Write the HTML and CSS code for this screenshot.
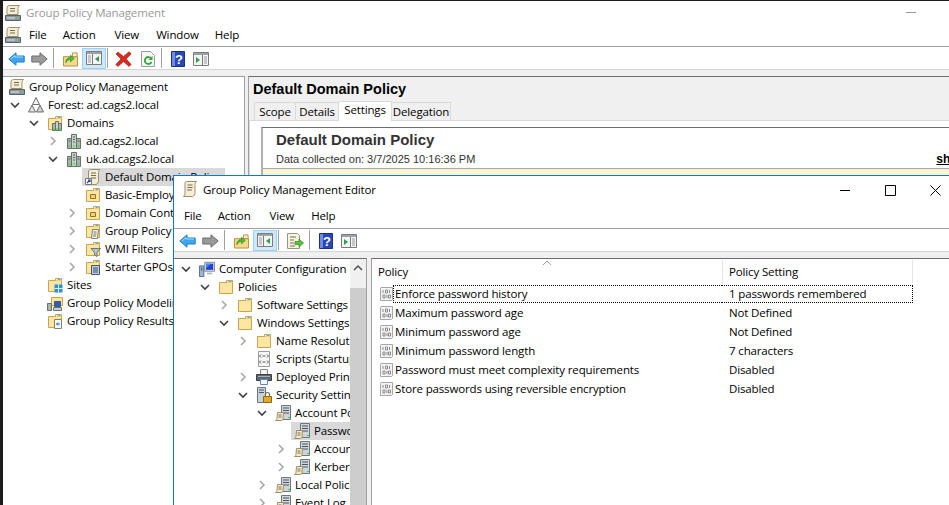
FILE: index.html
```html
<!DOCTYPE html>
<html lang="en">
<head>
    <meta charset="UTF-8">
    <title>Group Policy Management</title>
    <link rel="stylesheet" href="styles.css">
</head>
<body>

<svg class="icon-defs" width="0" height="0">
    <symbol id="i-open" viewBox="0 0 12 12"><path d="M2 4l4 4 4-4" fill="none" stroke="#404040" stroke-width="1.6"/></symbol>
    <symbol id="i-closed" viewBox="0 0 12 12"><path d="M4 2l4 4-4 4" fill="none" stroke="#a8a8a8" stroke-width="1.6"/></symbol>

    <symbol id="i-scroll" viewBox="0 0 16 16"><path d="M4.500 .5h10c-1 1-1.500 2-1.500 3v8c0 2-1 3.500-2.500 4h-9c1-1 1.500-2 1.500-3V3c0-1.500.5-2.500 1.500-2.500z" fill="#f6eed3" stroke="#9b8f70"/><path d="M5.500 4h5M5.500 6.500h5M5 9h5" stroke="#6f6a5c"/></symbol>
    <symbol id="i-console" viewBox="0 0 16 16"><path d="M4.500 .5h10c-1 1-1.500 2-1.500 3v6H2V3c0-1.500 1-2.500 2.500-2.500z" fill="#f6eed3" stroke="#9b8f70"/><path d="M5 3.500h5M5 6h5" stroke="#6f6a5c"/><path d="M.5 10.500h15v5H.5z" fill="#8e9aa0" stroke="#59636a"/><path d="M2 13h8" stroke="#dfe5e8"/><path d="M12 13h2" stroke="#54d05a"/></symbol>
    <symbol id="i-forest" viewBox="0 0 16 16"><path d="M8 .5l3.500 7h-7z" fill="#f2f2f2" stroke="#6d6d6d"/><path d="M4 8l3.500 7H.5z" fill="#e0e0e0" stroke="#6d6d6d"/><path d="M12 8l3.500 7h-7z" fill="#cfcfcf" stroke="#6d6d6d"/></symbol>
    <symbol id="i-folder" viewBox="0 0 16 16"><path d="M1.500 3.500h13v11h-13z" fill="#fbe6a2" stroke="#c9a551"/><path d="M8.500 3.500v-2h6v2" fill="#fff6d8" stroke="#c9a551"/><path d="M10.500 2.500h3" stroke="#6aa5dc"/></symbol>
    <symbol id="i-server" viewBox="0 0 16 16"><path d="M1.500 5.500h4v10h-4zM10.500 5.500h4v10h-4z" fill="#aab6a8" stroke="#66736b"/><path d="M5.500 1.500h5v14h-5z" fill="#c6d0c6" stroke="#66736b"/><path d="M7 4h2M7 6.500h2M7 9h2M2.500 8h2M11.500 8h2" stroke="#53636a"/><path d="M2.500 13h2M7 13h2M11.500 13h2" stroke="#3bcf4a"/></symbol>
    <symbol id="i-domains" viewBox="0 0 16 16"><use href="#i-folder"/><path d="M5.500 8.500h3v7h-3zM11.500 8.500h3v7h-3z" fill="#aab6a8" stroke="#66736b"/><path d="M8.500 6.500h3v9h-3z" fill="#c6d0c6" stroke="#66736b"/><path d="M6 14h2M9 14h2M12 14h2" stroke="#3bcf4a"/></symbol>
    <symbol id="i-gpolink" viewBox="0 0 16 16"><path d="M5.500 .5h9.500c-1 1-1.500 2-1.500 3v8c0 2-1 3.500-2.500 4H3.500V3c0-1.500.5-2.500 2-2.500z" fill="#f6eed3" stroke="#9b8f70"/><path d="M6 4h5M6 6.500h5M6 9h5" stroke="#6f6a5c"/><path d="M.5 9.500h6v6h-6z" fill="#fff" stroke="#777"/><path d="M2 14l3-3M3 11h2v2" fill="none" stroke="#1d3fb5" stroke-width="1.200"/></symbol>
    <symbol id="i-ou" viewBox="0 0 16 16"><use href="#i-folder"/><path d="M5.500 7.500h5v4h-5z" fill="#f6cf76" stroke="#8d7430"/></symbol>
    <symbol id="i-gpofolder" viewBox="0 0 16 16"><use href="#i-folder"/><path d="M7.500 6.500h6l-1 9h-6z" fill="#f4f2e8" stroke="#83806f"/><path d="M8.500 9h3M8.500 11h3M8 13h3" stroke="#777"/></symbol>
    <symbol id="i-wmi" viewBox="0 0 16 16"><use href="#i-folder"/><path d="M6 7.500h9.500l-3.500 4v4l-2.500-1.500v-2.500z" fill="#b9c2c9" stroke="#677681"/></symbol>
    <symbol id="i-starter" viewBox="0 0 16 16"><use href="#i-folder"/><path d="M6.500 6.500h8v9h-8z" fill="#c5cfdc" stroke="#46566b"/><path d="M8 9h5M8 11h5M8 13h5" stroke="#2f4c78"/></symbol>
    <symbol id="i-sites" viewBox="0 0 16 16"><use href="#i-folder"/><path d="M7.500 7.500h8v8h-8z" fill="#2f8fd6"/><path d="M11.500 7.500v8M7.500 11.500h8" stroke="#d9eefb"/></symbol>
    <symbol id="i-modeling" viewBox="0 0 16 16"><path d="M4.500 2.500h11v8h-11z" fill="#fbe6a2" stroke="#c9a551"/><path d="M7.500 6.500h6v5h-6z" fill="#2c5fc4" stroke="#4a5870"/><path d="M.5 8.500h4v7h-4z" fill="#aab6a8" stroke="#66736b"/><path d="M6.500 12.500h8v3h-8z" fill="#c9d1d9" stroke="#66736b"/></symbol>
    <symbol id="i-results" viewBox="0 0 16 16"><use href="#i-folder"/><path d="M7.500 6.500h7v9h-7z" fill="#f7f7f7" stroke="#83806f"/><path d="M13 11H9.500M11 9.500L9.500 11l1.500 1.500" fill="none" stroke="#2d6ab3"/></symbol>

    <symbol id="i-computer" viewBox="0 0 18 18"><path d="M6.500 1.500h11v10h-11z" fill="#e3e7ec" stroke="#717c88"/><path d="M8 3h8v7H8z" fill="#1f3fd0"/><path d="M8 3l6 0-6 5z" fill="#3d8df0"/><path d="M9 13h6v2H9z" fill="#b0b8c0"/><path d="M.5 5.500h5v12h-5z" fill="#9fb6d3" stroke="#4d647f"/><path d="M2 8h2M2 10h2" stroke="#1e3f73"/></symbol>
    <symbol id="i-scripts" viewBox="0 0 16 16"><path d="M2.500 .5h11v15h-11z" fill="#f7f7f7" stroke="#9a9a9a"/><path d="M5 3.500l-1.500 1.500 1.500 1.500M11 3.500l1.500 1.500-1.500 1.500M5 9.500l-1.500 1.500 1.500 1.500M11 9.500l1.500 1.500-1.500 1.500M6.500 5h3M6.500 11h3" fill="none" stroke="#555"/></symbol>
    <symbol id="i-printer" viewBox="0 0 16 16"><path d="M4.500 .5h7v5h-7z" fill="#f4f4f4" stroke="#888"/><path d="M.5 5.500h15v6H.5z" fill="#5f666d" stroke="#3a3f44"/><path d="M4.500 10.500h7v5h-7z" fill="#fff" stroke="#5a8bc4"/><path d="M2 7.500h12" stroke="#a7adb3"/></symbol>
    <symbol id="i-security" viewBox="0 0 16 16"><path d="M1.500 .5h8v15h-8z" fill="#c9d2da" stroke="#6c7780"/><path d="M3 3h5M3 5.500h5" stroke="#4c5761"/><path d="M7.500 9.500h8v6h-8z" fill="#e0ac28" stroke="#8a6a10"/><path d="M9.500 9.500v-2a2 2 0 0 1 4 0v2" fill="none" stroke="#7a6a3c" stroke-width="1.200"/></symbol>
    <symbol id="i-policy" viewBox="0 0 16 16"><path d="M6.500 .5h9v14h-9z" fill="#cfd6da" stroke="#6c7780"/><path d="M8 3h6M8 5.500h6M8 8h6" stroke="#4c5761"/><path d="M13 12.500h2" stroke="#2fd048"/><path d="M2.500 7.500h6l-.5 6c0 1-.5 2-1.500 2H.5c1-.5 1.500-1 1.500-2z" fill="#f6e9c2" stroke="#9b8f70"/><path d="M3.500 10h3M3.500 12h3" stroke="#7a7058"/></symbol>
    <symbol id="i-bits" viewBox="0 0 14 14"><path d="M2 .5h11.500v12l-1 1H1.500v-12z" fill="#f3f3f3" stroke="#a6a6a6"/><path d="M4 3v3M6.500 3h2v3h-2zM9.500 8h2v3h-2zM4 8h2v3H4zM8 8v3M10.500 3v3" fill="none" stroke="#8c8c8c"/></symbol>

    <symbol id="t-back" viewBox="0 0 17 14"><path d="M.8 7L8 .8V4h8.200v6H8v3.200z" fill="#3ea6ee" stroke="#1f7fd0"/><path d="M3 7l4-3.500V5h8" fill="none" stroke="#a6dcfb"/></symbol>
    <symbol id="t-forward" viewBox="0 0 17 14"><path d="M16.200 7L9 .8V4H.8v6H9v3.200z" fill="#9b9b9b" stroke="#6a6a6a"/></symbol>
    <symbol id="t-up" viewBox="0 0 16 16"><path d="M.5 5.500h15v10H.5z" fill="#f7d98c" stroke="#b08d3e"/><path d="M10 1.500h5v4h-5z" fill="#fdf0c4" stroke="#b08d3e"/><path d="M3 12c0-4 2-5.500 5-5.500V4l4 3.500L8 11V8.500c-2 0-3.500 1-5 3.500z" fill="#52c234" stroke="#2d8a1a" stroke-width=".7"/></symbol>
    <symbol id="t-tree" viewBox="0 0 16 14"><path d="M.5 .5h15v13H.5z" fill="#f4f4f4" stroke="#7b7b7b"/><path d="M1 1h14v2H1z" fill="#9aa3a9"/><path d="M6.500 3v10" stroke="#7b7b7b"/><path d="M2 5h3M2 7h3M2 9h3M2 11h3" stroke="#9a9a9a"/><path d="M13 5v6L9 8z" fill="#2f9e4f"/></symbol>
    <symbol id="t-delete" viewBox="0 0 17 16"><path d="M1 3l2-2 5.500 4.500L14 .8l2.200 2-5 5.200 5 5.500-2.200 2-5.500-5-5.500 5L.8 13.500 6 8z" fill="#d92b20" stroke="#a8160e" stroke-width=".6"/></symbol>
    <symbol id="t-refresh" viewBox="0 0 14 16"><path d="M.5 .5h9l4 4v11H.5z" fill="#f6f6f6" stroke="#9a9a9a"/><path d="M10.200 7.500A3.500 3.500 0 1 0 10.500 11" fill="none" stroke="#35a53a" stroke-width="1.800"/><path d="M11.500 5v4h-4z" fill="#35a53a"/></symbol>
    <symbol id="t-help" viewBox="0 0 14 16"><path d="M.5 .5h13v15H.5z" fill="#2848b8" stroke="#1a2f86"/><path d="M1 1h3v14H1z" fill="#6f8ae0"/><text x="8" y="12.500" class="help-mark">?</text></symbol>
    <symbol id="t-action" viewBox="0 0 16 14"><path d="M.5 .5h15v13H.5z" fill="#f4f4f4" stroke="#7b7b7b"/><path d="M1 1h14v2H1z" fill="#9aa3a9"/><path d="M9.500 3v10" stroke="#7b7b7b"/><path d="M11 5h3M11 7h3M11 9h3M11 11h3" stroke="#9a9a9a"/><path d="M3 5v6l4-3z" fill="#2f9e4f"/></symbol>
    <symbol id="t-export" viewBox="0 0 17 16"><path d="M.5 .5h10l2 2v13H.5z" fill="#f7f2de" stroke="#9b9580"/><path d="M3 4h6M3 7h4M3 10h4M3 13h5" stroke="#77725f"/><path d="M8 8.500h4V6l4.500 4-4.500 4v-2.500H8z" fill="#58c23c" stroke="#2f8a1e" stroke-width=".7"/></symbol>
</svg>

<div class="window main-window">
    <div class="titlebar">
        <svg class="title-icon"><use href="#i-console"/></svg>
        <span class="title-text dim">Group Policy Management</span>
        <span class="min-dash"></span>
    </div>
    <div class="menubar">
        <svg class="menu-icon"><use href="#i-console"/></svg>
        <span class="menu-item">File</span>
        <span class="menu-item m-action">Action</span>
        <span class="menu-item m-view">View</span>
        <span class="menu-item">Window</span>
        <span class="menu-item">Help</span>
    </div>
    <div class="toolbar">
        <svg class="tb tb-arrow"><use href="#t-back"/></svg>
        <svg class="tb tb-arrow"><use href="#t-forward"/></svg>
        <span class="tb-sep"></span>
        <svg class="tb tb-folder"><use href="#t-up"/></svg>
        <span class="tb-on"><svg class="tb-pane"><use href="#t-tree"/></svg></span>
        <span class="tb-sep sep-tight"></span>
        <svg class="tb tb-delete"><use href="#t-delete"/></svg>
        <svg class="tb tb-refresh"><use href="#t-refresh"/></svg>
        <span class="tb-sep"></span>
        <svg class="tb tb-help"><use href="#t-help"/></svg>
        <svg class="tb tb-action"><use href="#t-action"/></svg>
    </div>
    <div class="panes">
        <div class="tree main-tree">
            <div class="row root"><span class="node"><svg class="ico"><use href="#i-console"/></svg>Group Policy Management</span></div>
            <div class="row l1"><svg class="chev"><use href="#i-open"/></svg><span class="node"><svg class="ico"><use href="#i-forest"/></svg>Forest: ad.cags2.local</span></div>
            <div class="row l2"><svg class="chev"><use href="#i-open"/></svg><span class="node"><svg class="ico"><use href="#i-domains"/></svg>Domains</span></div>
            <div class="row l3"><svg class="chev"><use href="#i-closed"/></svg><span class="node"><svg class="ico"><use href="#i-server"/></svg>ad.cags2.local</span></div>
            <div class="row l3"><svg class="chev"><use href="#i-open"/></svg><span class="node"><svg class="ico"><use href="#i-server"/></svg>uk.ad.cags2.local</span></div>
            <div class="row l4"><span class="chev"></span><span class="node selected"><svg class="ico"><use href="#i-gpolink"/></svg>Default Domain Policy</span></div>
            <div class="row l4"><span class="chev"></span><span class="node"><svg class="ico"><use href="#i-ou"/></svg>Basic-Employees</span></div>
            <div class="row l4"><svg class="chev"><use href="#i-closed"/></svg><span class="node"><svg class="ico"><use href="#i-ou"/></svg>Domain Controllers</span></div>
            <div class="row l4"><svg class="chev"><use href="#i-closed"/></svg><span class="node"><svg class="ico"><use href="#i-gpofolder"/></svg>Group Policy Objects</span></div>
            <div class="row l4"><svg class="chev"><use href="#i-closed"/></svg><span class="node"><svg class="ico"><use href="#i-wmi"/></svg>WMI Filters</span></div>
            <div class="row l4"><svg class="chev"><use href="#i-closed"/></svg><span class="node"><svg class="ico"><use href="#i-starter"/></svg>Starter GPOs</span></div>
            <div class="row l2"><span class="chev"></span><span class="node"><svg class="ico"><use href="#i-sites"/></svg>Sites</span></div>
            <div class="row l2"><span class="chev"></span><span class="node"><svg class="ico"><use href="#i-modeling"/></svg>Group Policy Modeling</span></div>
            <div class="row l2"><span class="chev"></span><span class="node"><svg class="ico"><use href="#i-results"/></svg>Group Policy Results</span></div>
        </div>
        <div class="detail">
            <h2 class="detail-title">Default Domain Policy</h2>
            <div class="tabs">
                <span class="tab tab-scope">Scope</span>
                <span class="tab tab-details">Details</span>
                <span class="tab tab-settings active">Settings</span>
                <span class="tab tab-delegation">Delegation</span>
            </div>
            <div class="tab-body">
                <div class="report">
                    <div class="report-head">
                        <h3 class="report-title">Default Domain Policy</h3>
                        <div class="report-meta">
                            <span>Data collected on: 3/7/2025 10:16:36 PM</span>
                            <span class="show-all">show all</span>
                        </div>
                    </div>
                    <div class="report-band"></div>
                </div>
            </div>
        </div>
    </div>
</div>

<div class="window editor-window">
    <div class="titlebar editor-title">
        <svg class="title-icon"><use href="#i-scroll"/></svg>
        <span class="title-text">Group Policy Management Editor</span>
        <div class="controls">
            <span class="ctl"><svg class="ctl-svg" viewBox="0 0 11 11"><path d="M0 5.500h10" stroke="#000"/></svg></span>
            <span class="ctl"><svg class="ctl-svg" viewBox="0 0 11 11"><path d="M.5 .5h10v10H.5z" fill="none" stroke="#000"/></svg></span>
            <span class="ctl"><svg class="ctl-svg" viewBox="0 0 11 11"><path d="M.5 .5l10 10M10.500 .5l-10 10" stroke="#000"/></svg></span>
        </div>
    </div>
    <div class="menubar editor-menu">
        <span class="menu-item">File</span>
        <span class="menu-item m-action">Action</span>
        <span class="menu-item m-view">View</span>
        <span class="menu-item">Help</span>
    </div>
    <div class="toolbar editor-tools">
        <svg class="tb tb-arrow"><use href="#t-back"/></svg>
        <svg class="tb tb-arrow"><use href="#t-forward"/></svg>
        <span class="tb-sep"></span>
        <svg class="tb tb-folder"><use href="#t-up"/></svg>
        <span class="tb-on"><svg class="tb-pane"><use href="#t-tree"/></svg></span>
        <span class="tb-sep sep-tight"></span>
        <svg class="tb tb-export"><use href="#t-export"/></svg>
        <span class="tb-sep"></span>
        <svg class="tb tb-help"><use href="#t-help"/></svg>
        <svg class="tb tb-action"><use href="#t-action"/></svg>
    </div>
    <div class="panes editor-panes">
        <div class="tree editor-tree">
            <div class="tree-rows">
                <div class="row l1"><svg class="chev"><use href="#i-open"/></svg><span class="node"><svg class="ico"><use href="#i-computer"/></svg>Computer Configuration</span></div>
                <div class="row l2"><svg class="chev"><use href="#i-open"/></svg><span class="node"><svg class="ico"><use href="#i-folder"/></svg>Policies</span></div>
                <div class="row l3"><svg class="chev"><use href="#i-closed"/></svg><span class="node"><svg class="ico"><use href="#i-folder"/></svg>Software Settings</span></div>
                <div class="row l3"><svg class="chev"><use href="#i-open"/></svg><span class="node"><svg class="ico"><use href="#i-folder"/></svg>Windows Settings</span></div>
                <div class="row l4"><svg class="chev"><use href="#i-closed"/></svg><span class="node"><svg class="ico"><use href="#i-folder"/></svg>Name Resolution Policy</span></div>
                <div class="row l4"><span class="chev"></span><span class="node"><svg class="ico"><use href="#i-scripts"/></svg>Scripts (Startup/Shutdown)</span></div>
                <div class="row l4"><svg class="chev"><use href="#i-closed"/></svg><span class="node"><svg class="ico"><use href="#i-printer"/></svg>Deployed Printers</span></div>
                <div class="row l4"><svg class="chev"><use href="#i-open"/></svg><span class="node"><svg class="ico"><use href="#i-security"/></svg>Security Settings</span></div>
                <div class="row l5"><svg class="chev"><use href="#i-open"/></svg><span class="node"><svg class="ico"><use href="#i-policy"/></svg>Account Policies</span></div>
                <div class="row l6"><span class="chev"></span><span class="node selected fill"><svg class="ico"><use href="#i-policy"/></svg>Password Policy</span></div>
                <div class="row l6"><svg class="chev"><use href="#i-closed"/></svg><span class="node"><svg class="ico"><use href="#i-policy"/></svg>Account Lockout Policy</span></div>
                <div class="row l6"><svg class="chev"><use href="#i-closed"/></svg><span class="node"><svg class="ico"><use href="#i-policy"/></svg>Kerberos Policy</span></div>
                <div class="row l5"><svg class="chev"><use href="#i-closed"/></svg><span class="node"><svg class="ico"><use href="#i-policy"/></svg>Local Policies</span></div>
                <div class="row l5"><svg class="chev"><use href="#i-closed"/></svg><span class="node"><svg class="ico"><use href="#i-policy"/></svg>Event Log</span></div>
            </div>
            <div class="scrollbar">
                <div class="scroll-up"><svg class="scroll-arrow" viewBox="0 0 12 12"><path d="M2 8l4-4 4 4" fill="none" stroke="#505050" stroke-width="1.500"/></svg></div>
                <div class="scroll-thumb"></div>
            </div>
        </div>
        <div class="list">
            <div class="list-head">
                <span class="col-policy">Policy<svg class="sort-arrow" viewBox="0 0 10 6"><path d="M1 5l4-4 4 4" fill="none" stroke="#9a9a9a"/></svg></span>
                <span class="col-setting">Policy Setting</span>
            </div>
            <div class="list-row"><svg class="bits"><use href="#i-bits"/></svg><span class="col-name focus">Enforce password history</span><span class="col-value focus">1 passwords remembered</span></div>
            <div class="list-row"><svg class="bits"><use href="#i-bits"/></svg><span class="col-name">Maximum password age</span><span class="col-value">Not Defined</span></div>
            <div class="list-row"><svg class="bits"><use href="#i-bits"/></svg><span class="col-name">Minimum password age</span><span class="col-value">Not Defined</span></div>
            <div class="list-row"><svg class="bits"><use href="#i-bits"/></svg><span class="col-name">Minimum password length</span><span class="col-value">7 characters</span></div>
            <div class="list-row"><svg class="bits"><use href="#i-bits"/></svg><span class="col-name">Password must meet complexity requirements</span><span class="col-value">Disabled</span></div>
            <div class="list-row"><svg class="bits"><use href="#i-bits"/></svg><span class="col-name">Store passwords using reversible encryption</span><span class="col-value">Disabled</span></div>
        </div>
    </div>
</div>

</body>
</html>
```

FILE: styles.css
```css
html, body {
    height: 100%;
}
body {
    margin: 0;
    padding: 1px 0 0 3px;
    box-sizing: border-box;
    background-color: #1c1c1c;
    font-family: "Open Sans", "Noto Sans", sans-serif;
    font-size: 11.500px;
    letter-spacing: -0.14px;
    color: #000;
    overflow: hidden;
}
.icon-defs {
    position: absolute;
}
.help-mark {
    font-family: "Liberation Sans", sans-serif;
    font-size: 13px;
    font-weight: bold;
    fill: #fff;
    text-anchor: middle;
}
.window {
    background-color: #fff;
    overflow: hidden;
}
.main-window {
    height: 504px;
    display: flex;
    flex-direction: column;
}
.editor-window {
    position: absolute;
    left: 173px;
    top: 175px;
    width: 776px;
    height: 330px;
    box-sizing: border-box;
    border-top: 1px solid #0f78c8;
    border-left: 1px solid #0f78c8;
    display: flex;
    flex-direction: column;
}

/* title and menu */
.titlebar {
    height: 23px;
    flex: none;
    display: flex;
    align-items: center;
    padding-left: 2px;
}
.title-icon {
    width: 16px;
    height: 16px;
    margin-right: 5px;
}
.title-text {
    white-space: nowrap;
}
.dim {
    color: #999;
}
.min-dash {
    width: 10px;
    height: 1px;
    margin-left: auto;
    margin-right: 33px;
    background-color: #999;
}
.editor-title {
    height: 30px;
    padding-left: 8px;
    padding-bottom: 4px;
    box-sizing: border-box;
}
.controls {
    display: flex;
    align-self: flex-start;
    padding-top: 9px;
    margin-left: auto;
    margin-right: -9px;
}
.ctl {
    width: 45px;
    display: flex;
    justify-content: center;
}
.ctl-svg {
    width: 11px;
    height: 11px;
}
.menubar {
    flex: none;
    box-sizing: border-box;
    border-bottom: 1px solid #a0a0a0;
    height: 23px;
    display: flex;
    align-items: center;
    padding-left: 2px;
    padding-bottom: 2px;
}
.menu-icon {
    width: 16px;
    height: 16px;
    margin: 2px 8px 0 0;
}
.menu-item {
    margin-right: 16px;
}
.m-action {
    margin-right: 19px;
}
.m-view {
    margin-right: 17px;
}
.editor-menu {
    padding-left: 10px;
    padding-bottom: 3px;
}

/* toolbar */
.toolbar {
    height: 23px;
    flex: none;
    box-sizing: border-box;
    border-bottom: 1px solid #d5d5d5;
    display: flex;
    align-items: center;
    padding: 2px 0 0 5px;
}
.tb {
    flex: none;
}
.tb-arrow {
    width: 17px;
    height: 14px;
    margin-right: 6px;
}
.tb-arrow + .tb-arrow {
    margin-right: 5px;
}
.tb-sep {
    width: 1px;
    height: 20px;
    margin: -2px 9px 0 0;
    background-color: #a0a0a0;
}
.tb-folder {
    width: 15px;
    height: 16px;
    margin-right: 4px;
}
.tb-on {
    width: 24px;
    height: 21px;
    box-sizing: border-box;
    background-color: #cce8ff;
    border: 1px solid #99d1ff;
    display: flex;
    align-items: center;
    justify-content: center;
    padding-bottom: 1px;
    margin: -1px 1px 0 0;
}
.tb-pane {
    width: 16px;
    height: 14px;
}
.sep-tight {
    margin-right: 7px;
}
.tb-delete {
    width: 17px;
    height: 16px;
    margin-right: 9px;
}
.tb-refresh {
    width: 14px;
    height: 16px;
    margin-right: 6px;
}
.tb-help {
    width: 14px;
    height: 16px;
    margin-right: 8px;
}
.tb-action {
    width: 16px;
    height: 14px;
}
.tb-export {
    width: 17px;
    height: 16px;
    margin: 0 5px 0 1px;
}

/* panes */
.panes {
    flex: 1;
    min-height: 0;
    display: flex;
    background-color: #f0f0f0;
    padding-top: 6px;
}
.tree {
    overflow: hidden;
    background-color: #fff;
}
.main-tree {
    width: 242px;
    flex: none;
    box-sizing: border-box;
    border-top: 1px solid #a0a0a0;
    border-right: 1px solid #a0a0a0;
    padding-top: 1px;
}
.row {
    height: 18px;
    display: flex;
    align-items: center;
    white-space: nowrap;
}
.root { padding-left: 3px; }
.l1 { padding-left: 6px; }
.l2 { padding-left: 25px; }
.l3 { padding-left: 44px; }
.l4 { padding-left: 63px; }
.l5 { padding-left: 82px; }
.l6 { padding-left: 101px; }
.chev {
    width: 12px;
    height: 12px;
    flex: none;
    margin-right: 4px;
}
.node {
    height: 18px;
    box-sizing: border-box;
    display: flex;
    align-items: center;
    padding: 0 5px 2px 3px;
}
.selected {
    background-color: #d9d9d9;
}
.fill {
    flex: 1;
}
.ico {
    width: 16px;
    height: 16px;
    flex: none;
    margin: 2px 4px 0 0;
}

/* gpmc detail side */
.detail {
    flex: 1;
    min-width: 0;
    margin-left: 3px;
    border-top: 1px solid #6d6d6d;
    border-left: 1px solid #a0a0a0;
}
.detail-title {
    margin: 0;
    padding: 3px 0 0 4px;
    height: 21px;
    font-family: "Liberation Sans", sans-serif;
    font-size: 14.500px;
    letter-spacing: 0;
    line-height: 18px;
    font-weight: bold;
    white-space: nowrap;
    box-sizing: border-box;
}
.tabs {
    display: flex;
    height: 22px;
    align-items: flex-end;
    padding-left: 5px;
}
.tab {
    height: 18px;
    line-height: 18px;
    text-align: center;
    box-sizing: border-box;
    border: 1px solid #d9d9d9;
    border-bottom: 0;
    border-left: 0;
}
.tab-scope {
    width: 42px;
    border-left: 1px solid #d9d9d9;
}
.tab-details {
    width: 43px;
}
.tab-settings {
    width: 53px;
}
.tab-delegation {
    width: 59px;
}
.active {
    height: 20px;
    line-height: 16px;
    background-color: #fff;
    margin-bottom: -1px;
    position: relative;
}
.tab-body {
    background-color: #fff;
    border-top: 1px solid #d9d9d9;
    border-left: 1px solid #d9d9d9;
    padding: 6px 0 0 11px;
    height: 100%;
}
.report {
    border-top: 1px solid #6d6d6d;
    border-left: 2px solid #b0b0b0;
}
.report-head {
    height: 40px;
    padding-left: 12px;
    font-family: "Liberation Sans", sans-serif;
    letter-spacing: 0;
    color: #333;
}
.report-title {
    margin: 0;
    padding-top: 3px;
    padding-left: 1px;
    font-size: 15px;
    line-height: 17px;
    font-weight: bold;
}
.report-meta {
    display: flex;
    margin-top: 4px;
    padding-left: 1px;
    font-size: 11px;
    line-height: 14px;
    white-space: nowrap;
}
.show-all {
    margin-left: 461px;
    font-size: 12px;
    font-weight: bold;
    color: #000;
    text-decoration: underline;
}
.report-band {
    height: 7px;
    border-top: 1px solid #a8a8a8;
    background-color: #fdf3d3;
}

/* editor */
.editor-tree {
    width: 193px;
    flex: none;
    display: flex;
    border-top: 1px solid #6d6d6d;
    border-right: 1px solid #a0a0a0;
    box-sizing: border-box;
}
.tree-rows {
    width: 176px;
    flex: none;
    overflow: hidden;
    padding-top: 1px;
}
.scrollbar {
    width: 16px;
    flex: none;
    background-color: #f0f0f0;
    display: flex;
    flex-direction: column;
}
.scroll-up {
    height: 29px;
    flex: none;
    display: flex;
    justify-content: center;
    padding-top: 3px;
    box-sizing: border-box;
}
.scroll-arrow {
    width: 12px;
    height: 12px;
}
.scroll-thumb {
    flex: 1;
    background-color: #cdcdcd;
}
.list {
    flex: 1;
    min-width: 0;
    margin-left: 4px;
    background-color: #fff;
    border-top: 1px solid #6d6d6d;
    border-left: 1px solid #a0a0a0;
}
.list-head {
    height: 25px;
    display: flex;
    align-items: center;
    padding-left: 6px;
}
.col-policy {
    width: 345px;
    height: 24px;
    display: flex;
    align-items: center;
    box-sizing: border-box;
    border-right: 1px solid #e5e5e5;
    position: relative;
}
.sort-arrow {
    position: absolute;
    left: 164px;
    top: 0;
    width: 10px;
    height: 6px;
}
.col-setting {
    width: 190px;
    height: 24px;
    display: flex;
    align-items: center;
    box-sizing: border-box;
    padding-left: 6px;
    border-right: 1px solid #e5e5e5;
}
.list-row {
    height: 19px;
    display: flex;
    align-items: center;
    padding-left: 7px;
    white-space: nowrap;
}
.bits {
    width: 14px;
    height: 14px;
    flex: none;
}
.col-name {
    width: 329px;
    height: 18px;
    line-height: 18px;
    box-sizing: border-box;
    padding-left: 2px;
    flex: none;
}
.col-value {
    width: 191px;
    height: 18px;
    line-height: 18px;
    box-sizing: border-box;
    padding-left: 7px;
    flex: none;
}
.focus {
    border-top: 1px dotted #000;
    border-bottom: 1px dotted #000;
    line-height: 16px;
}
.col-name.focus {
    border-left: 1px dotted #000;
    padding-left: 1px;
}
.col-value.focus {
    border-right: 1px dotted #000;
}
```
